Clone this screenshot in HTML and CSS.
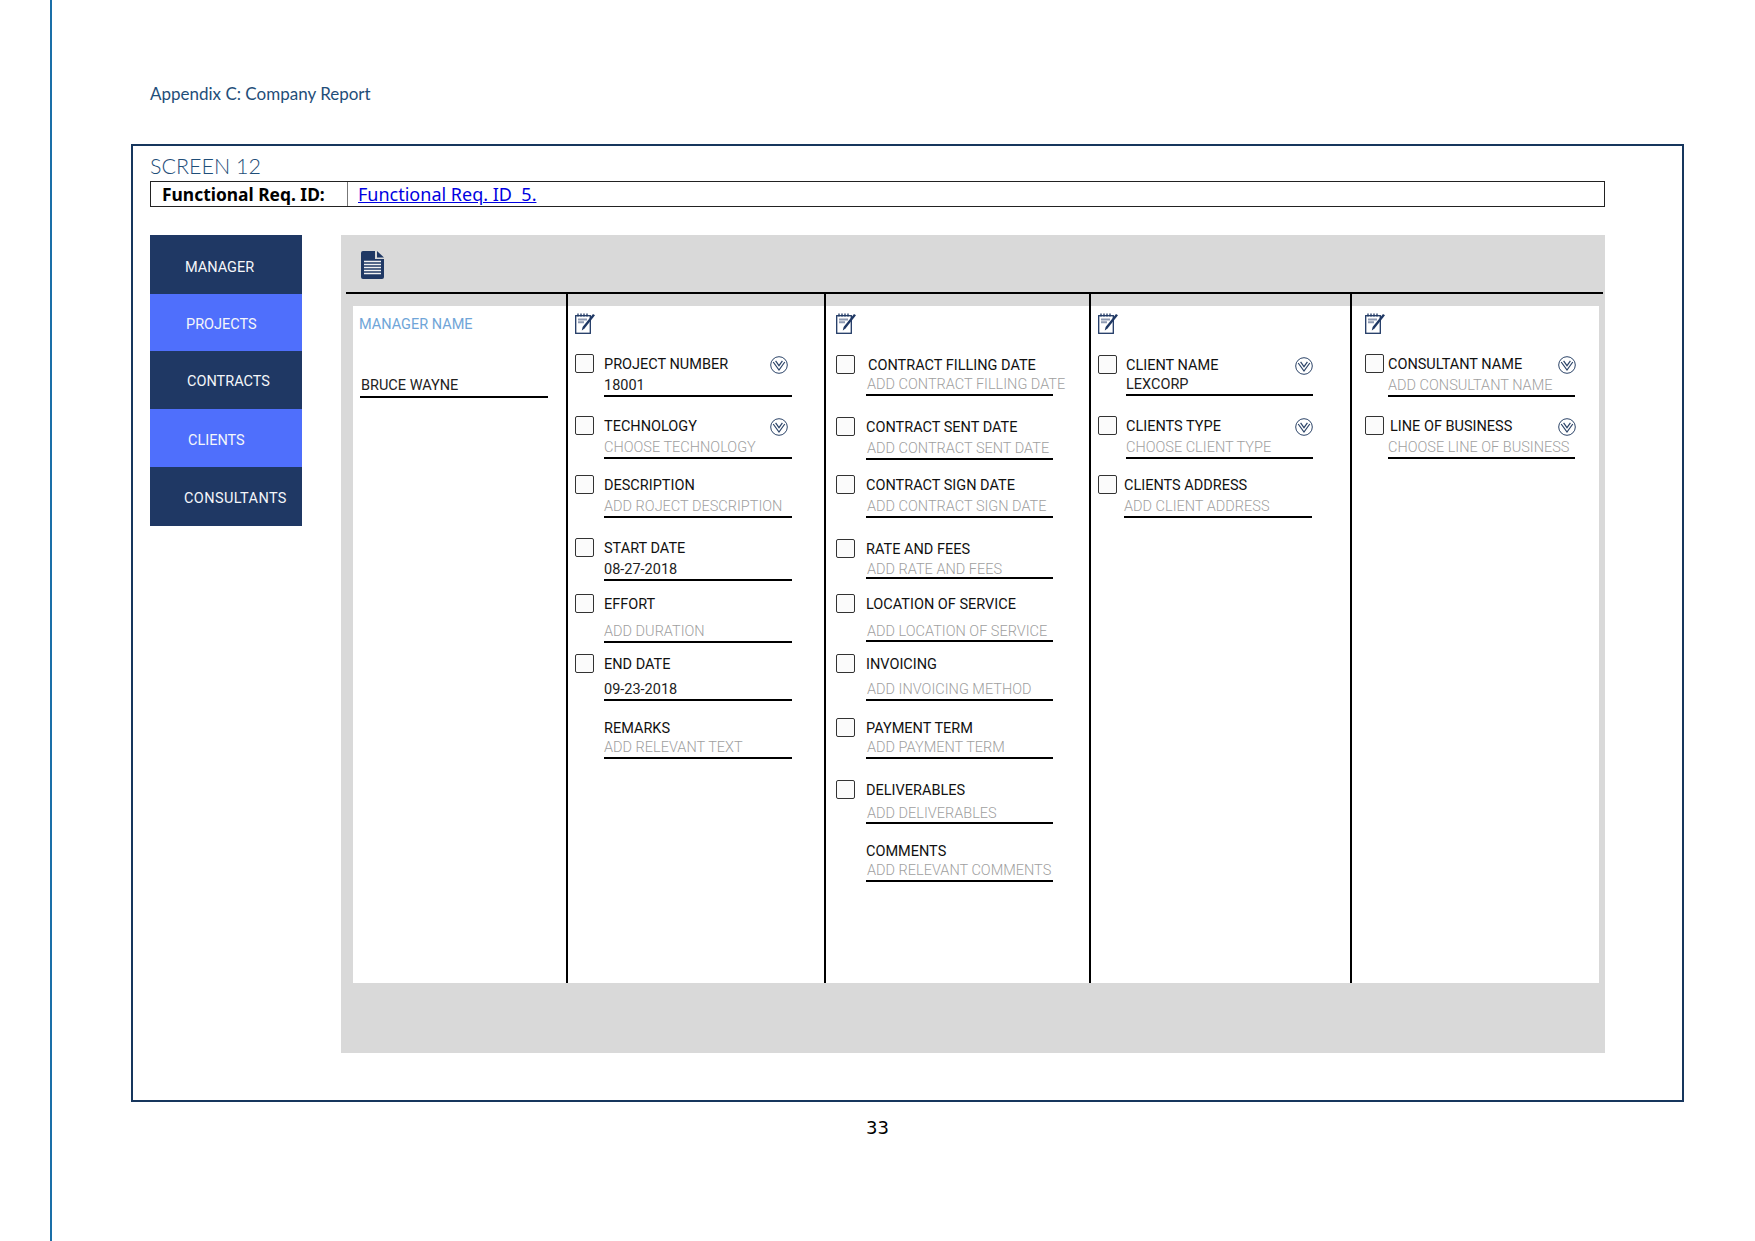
FILE: index.html
```html
<!DOCTYPE html>
<html lang="en">

<head>
    <meta charset="UTF-8">
    <title>Appendix C: Company Report</title>
    <link rel="stylesheet" href="styles.css">
</head>

<body>
    <svg class="icon-defs" width="0" height="0">
        <symbol id="icon-note" viewBox="0 0 20 21">
            <rect x="0.7" y="2.7" width="14.6" height="17.6" fill="none" stroke="#1f3864" stroke-width="1.3"/>
            <path d="M3 0.5v3M6 0.5v3M9 0.5v3M12 0.5v3" stroke="#1f3864" stroke-width="1.3"/>
            <path d="M3 6.5h9M3 9.2h6" stroke="#8f9bb3" stroke-width="1.9"/>
            <path d="M20 2.2L9.5 15.5L6.8 17.6L7.6 14L18 1z" fill="#1f3864"/>
        </symbol>
        <symbol id="icon-down" viewBox="0 0 18 18">
            <circle cx="9" cy="9" r="8.3" fill="none" stroke="#2c4468" stroke-width="1"/>
            <path d="M3.2 6L9 14L14.8 6" fill="none" stroke="#2c4468" stroke-width="1.2"/>
            <path d="M5.6 4.8L9 9.6L12.4 4.8" fill="none" stroke="#2c4468" stroke-width="1.2"/>
        </symbol>
    </svg>

    <div class="page">
        <div class="doc-title">Appendix C: Company Report</div>

        <div class="frame">
            <h2 class="screen-title">SCREEN 12</h2>
            <div class="req-row">
                <div class="req-name">Functional Req. ID:</div>
                <div class="req-link"><a href="#">Functional Req. ID&nbsp; 5.</a></div>
            </div>

            <div class="screen">
                <div class="nav">
                    <div class="nav-item nav-manager">MANAGER</div>
                    <div class="nav-item nav-projects active">PROJECTS</div>
                    <div class="nav-item nav-contracts">CONTRACTS</div>
                    <div class="nav-item nav-clients active">CLIENTS</div>
                    <div class="nav-item nav-consultants">CONSULTANTS</div>
                </div>

                <div class="panel">
                    <div class="panel-head">
                        <svg class="icon-file" width="23" height="28" viewBox="0 0 23 28">
                            <path d="M2 0H14V8H23V26a2 2 0 0 1-2 2H2a2 2 0 0 1-2-2V2a2 2 0 0 1 2-2z" fill="#1f3864"/>
                            <path d="M16 0L23 6.5H16z" fill="#1f3864"/>
                            <path d="M3 10.5H20M3 13.5H20M3 16.5H20M3 19.5H20M3 22.5H20" stroke="#f2f2f2" stroke-width="1.3"/>
                        </svg>
                    </div>

                    <div class="columns">
                        <div class="col col-manager">
                            <div class="col-body">
                                <div class="manager-title">MANAGER NAME</div>
                                <div class="value manager-value">BRUCE WAYNE</div>
                            </div>
                        </div>

                        <div class="col col-projects">
                            <div class="col-body">
                                <svg class="icon-note"><use href="#icon-note"/></svg>
                                <div class="fields">
                                    <div class="field"><span class="check"></span><div><div class="label">PROJECT NUMBER<svg class="icon-down"><use href="#icon-down"/></svg></div><div class="value">18001</div></div></div>
                                    <div class="field"><span class="check"></span><div><div class="label">TECHNOLOGY<svg class="icon-down"><use href="#icon-down"/></svg></div><div class="value hint">CHOOSE TECHNOLOGY</div></div></div>
                                    <div class="field"><span class="check"></span><div><div class="label">DESCRIPTION</div><div class="value hint">ADD ROJECT DESCRIPTION</div></div></div>
                                    <div class="field"><span class="check"></span><div><div class="label">START DATE</div><div class="value">08-27-2018</div></div></div>
                                    <div class="field"><span class="check"></span><div><div class="label">EFFORT</div><div class="value hint loose">ADD DURATION</div></div></div>
                                    <div class="field"><span class="check"></span><div><div class="label">END DATE</div><div class="value mid">09-23-2018</div></div></div>
                                    <div class="field no-check"><div><div class="label">REMARKS</div><div class="value hint tight">ADD RELEVANT TEXT</div></div></div>
                                </div>
                            </div>
                        </div>

                        <div class="col col-contracts">
                            <div class="col-body">
                                <svg class="icon-note"><use href="#icon-note"/></svg>
                                <div class="fields">
                                    <div class="field"><span class="check"></span><div><div class="label indent">CONTRACT FILLING DATE</div><div class="value hint tight">ADD CONTRACT FILLING DATE</div></div></div>
                                    <div class="field"><span class="check"></span><div><div class="label">CONTRACT SENT DATE</div><div class="value hint">ADD CONTRACT SENT DATE</div></div></div>
                                    <div class="field"><span class="check"></span><div><div class="label">CONTRACT SIGN DATE</div><div class="value hint">ADD CONTRACT SIGN DATE</div></div></div>
                                    <div class="field"><span class="check"></span><div><div class="label">RATE AND FEES</div><div class="value hint short">ADD RATE AND FEES</div></div></div>
                                    <div class="field"><span class="check"></span><div><div class="label">LOCATION OF SERVICE</div><div class="value hint loose snug">ADD LOCATION OF SERVICE</div></div></div>
                                    <div class="field"><span class="check"></span><div><div class="label">INVOICING</div><div class="value hint mid">ADD INVOICING METHOD</div></div></div>
                                    <div class="field"><span class="check"></span><div><div class="label">PAYMENT TERM</div><div class="value hint tight">ADD PAYMENT TERM</div></div></div>
                                    <div class="field"><span class="check"></span><div><div class="label">DELIVERABLES</div><div class="value hint wide">ADD DELIVERABLES</div></div></div>
                                    <div class="field no-check"><div><div class="label">COMMENTS</div><div class="value hint tight">ADD RELEVANT COMMENTS</div></div></div>
                                </div>
                            </div>
                        </div>

                        <div class="col col-clients">
                            <div class="col-body">
                                <svg class="icon-note"><use href="#icon-note"/></svg>
                                <div class="fields">
                                    <div class="field"><span class="check"></span><div><div class="label">CLIENT NAME<svg class="icon-down"><use href="#icon-down"/></svg></div><div class="value tight">LEXCORP</div></div></div>
                                    <div class="field"><span class="check"></span><div><div class="label">CLIENTS TYPE<svg class="icon-down"><use href="#icon-down"/></svg></div><div class="value hint">CHOOSE CLIENT TYPE</div></div></div>
                                    <div class="field shift"><span class="check"></span><div><div class="label">CLIENTS ADDRESS</div><div class="value hint">ADD CLIENT ADDRESS</div></div></div>
                                </div>
                            </div>
                        </div>

                        <div class="col col-consultants">
                            <div class="col-body">
                                <svg class="icon-note"><use href="#icon-note"/></svg>
                                <div class="fields">
                                    <div class="field"><span class="check"></span><div><div class="label">CONSULTANT NAME<svg class="icon-down"><use href="#icon-down"/></svg></div><div class="value hint">ADD CONSULTANT NAME</div></div></div>
                                    <div class="field"><span class="check"></span><div><div class="label indent">LINE OF BUSINESS<svg class="icon-down"><use href="#icon-down"/></svg></div><div class="value hint">CHOOSE LINE OF BUSINESS</div></div></div>
                                </div>
                            </div>
                        </div>
                    </div>
                </div>
            </div>
        </div>

        <div class="page-number">33</div>
    </div>
</body>

</html>
```

FILE: styles.css
```css
* {
    box-sizing: border-box;
}

body {
    margin: 0;
    background: #fff;
    font-family: Roboto, "Liberation Sans", sans-serif;
    overflow: hidden;
}

.icon-defs {
    display: block;
    height: 0;
}

.page {
    height: 1241px;
    margin-left: 50px;
    padding: 83px 0 0 79px;
    border-left: 2px solid #1a6fa8;
}

.doc-title {
    margin: 0 0 39px 19px;
    font-family: Lato, sans-serif;
    font-size: 17px;
    line-height: 22px;
    color: #1f4e79;
}

.frame {
    width: 1553px;
    height: 958px;
    padding: 5px 0 0 17px;
    border: 2px solid #17365d;
}

.screen-title {
    margin: 0;
    font-family: Lato, sans-serif;
    font-size: 21.5px;
    font-weight: 300;
    line-height: 30px;
    color: #1f4e79;
}

.req-row {
    display: flex;
    width: 1455px;
    height: 26px;
    border: 1px solid #222;
    font-family: "Noto Sans", sans-serif;
    font-size: 18px;
    line-height: 24px;
}

.req-name {
    width: 197px;
    padding-left: 11px;
    border-right: 1px solid #777;
    font-size: 17.4px;
    font-weight: 700;
    color: #000;
}

.req-link {
    padding-left: 10px;
}

.req-link a {
    color: #0000e0;
}

.screen {
    display: flex;
    gap: 39px;
    margin-top: 28px;
}

/* left menu */
.nav {
    width: 152px;
    height: 291px;
}

.nav-item {
    display: flex;
    align-items: center;
    background: #1f3864;
    font-size: 14.5px;
    color: #f4f6fa;
}

.nav-item.active {
    background: #4f6ffc;
}

.nav-manager { height: 59px; padding: 6px 0 0 35px; }
.nav-projects { height: 57px; padding: 4px 0 0 36px; }
.nav-contracts { height: 58px; padding: 2px 0 0 37px; }
.nav-clients { height: 58px; padding: 4px 0 0 38px; }
.nav-consultants { height: 59px; padding: 4px 0 0 34px; letter-spacing: 0.4px; }

/* grey panel */
.panel {
    width: 1264px;
    height: 818px;
    padding-right: 6px;
    background: #d9d9d9;
}

.panel-head {
    height: 59px;
    margin: 0 -4px 0 5px;
    padding: 16px 0 0 15px;
    border-bottom: 2px solid #000;
}

.icon-file {
    display: block;
}

.columns {
    display: grid;
    grid-template-columns: 214px 258px 265px 261px 248px;
    margin-left: 12px;
}

.col {
    height: 689px;
    padding-top: 12px;
}

.col + .col {
    margin-left: -1px;
    border-left: 2px solid #000;
}

.col-body {
    height: 677px;
    padding-top: 7px;
    background: #fff;
}

.col-manager .col-body {
    padding-left: 6px;
}

.manager-title {
    padding-top: 2px;
    font-size: 14.5px;
    line-height: 20px;
    color: #6fa5d8;
}

.icon-note {
    display: block;
    width: 20px;
    height: 21px;
}

.fields {
    display: grid;
    margin-top: 21px;
}

.field {
    display: grid;
    align-items: start;
}

.check {
    display: block;
    width: 19px;
    height: 19px;
    margin-top: -1px;
    border: 1px solid #333;
    border-radius: 2px;
    background: #fbfbfb;
}

.no-check {
    justify-content: start;
}

.label {
    display: flex;
    justify-content: space-between;
    align-items: center;
    height: 20px;
    font-size: 14.5px;
    line-height: 20px;
    color: #111;
    white-space: nowrap;
}

.value {
    height: 21px;
    margin-top: 1px;
    border-bottom: 2px solid #000;
    font-size: 14.5px;
    line-height: 20px;
    color: #222;
    white-space: nowrap;
}

.manager-value {
    width: 188px;
    height: 22px;
    margin: 41px 0 0 1px;
    padding-left: 1px;
}

.hint {
    font-weight: 300;
    color: #a0a0a0;
}

.tight { margin-top: -1px; }
.mid { margin-top: 5px; }
.loose { margin-top: 7px; }
.wide { margin-top: 3px; height: 20px; }
.snug { height: 20px; }
.short { margin-top: 0; height: 19px; }

.indent {
    padding-left: 2px;
}

.icon-down {
    flex: none;
    width: 18px;
    height: 18px;
    margin-top: -1px;
}

/* field columns: row heights follow the label positions of each column */
.col-projects .col-body { padding-left: 7px; }
.col-projects .fields { grid-template-rows: 62px 59px 63px 56px 60px 64px auto; }
.col-projects .field { grid-template-columns: 29px 188px; }
.col-projects .no-check { padding-left: 29px; grid-template-columns: 188px; }
.col-projects .icon-down { margin-right: 4px; }

.col-contracts .col-body { padding-left: 10px; }
.col-contracts .fields { grid-template-rows: 62px 58px 64px 55px 60px 64px 62px 61px auto; margin-top: 22px; }
.col-contracts .field { grid-template-columns: 30px 187px; }
.col-contracts .no-check { padding-left: 30px; grid-template-columns: 187px; }
.col-contracts .hint { padding-left: 1px; }

.col-clients .col-body { padding-left: 7px; }
.col-clients .fields { grid-template-rows: 61px 59px auto; margin-top: 22px; }
.col-clients .field { grid-template-columns: 28px 187px; }
.col-clients .shift { grid-template-columns: 26px 188px; }

.col-consultants .col-body { padding-left: 13px; }
.col-consultants .fields { grid-template-rows: 62px auto; }
.col-consultants .field { grid-template-columns: 23px 187px; }
.col-consultants .icon-down { margin-right: -1px; }

.page-number {
    width: 1493px;
    margin: 14px 0 0;
    font-family: "DejaVu Sans", sans-serif;
    font-size: 18px;
    line-height: 24px;
    text-align: center;
    color: #000;
}
```
